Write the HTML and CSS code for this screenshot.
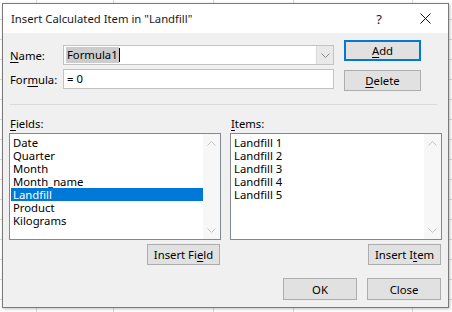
FILE: index.html
```html
<!DOCTYPE html>
<html lang="en">
<head>
<meta charset="UTF-8">
<meta name="viewport" content="width=device-width, initial-scale=1.0">
<title>Insert Calculated Item</title>
<link rel="stylesheet" href="styles.css">
</head>
<body>

<div class="dialog">
    <div class="titlebar">
        <span class="title">Insert Calculated Item in "Landfill"</span>
        <span class="cap-btn help">?</span>
        <span class="cap-btn close">
            <svg width="11" height="11" viewBox="0 0 11 11"><path d="M0.5 0.5L10.5 10.5M10.5 0.5L0.5 10.5" stroke="#111" stroke-width="1"/></svg>
        </span>
    </div>

    <div class="content">
        <div class="top">
            <div class="inputs">
                <div class="row first">
                    <label class="lbl"><u>N</u>ame:</label>
                    <div class="combo">
                        <span class="combo-text"><span class="sel">Formula1</span><span class="caret"></span></span>
                        <span class="combo-arrow">
                            <svg width="9" height="5" viewBox="0 0 9 5"><path d="M0.5 0.5L4.5 4.5L8.5 0.5" fill="none" stroke="#8a8a8a"/></svg>
                        </span>
                    </div>
                </div>
                <div class="row">
                    <label class="lbl">For<u>m</u>ula:</label>
                    <div class="textbox">= 0</div>
                </div>
            </div>
            <div class="side-btns">
                <button class="btn default"><u>A</u>dd</button>
                <button class="btn"><u>D</u>elete</button>
            </div>
        </div>

        <div class="sep"></div>

        <div class="lists">
            <div class="col">
                <div class="list-label"><u>F</u>ields:</div>
                <div class="listbox">
                    <ul class="items">
                        <li>Date</li>
                        <li>Quarter</li>
                        <li>Month</li>
                        <li>Month_name</li>
                        <li class="selected">Landfill</li>
                        <li>Product</li>
                        <li>Kilograms</li>
                    </ul>
                    <div class="scroll">
                        <svg width="9" height="5" viewBox="0 0 9 5"><path d="M0.5 4.5L4.5 0.5L8.5 4.5" fill="none" stroke="#c2c2c2"/></svg>
                        <svg width="9" height="5" viewBox="0 0 9 5"><path d="M0.5 0.5L4.5 4.5L8.5 0.5" fill="none" stroke="#c2c2c2"/></svg>
                    </div>
                </div>
                <div class="col-foot">
                    <button class="btn insert">Insert Fi<u>e</u>ld</button>
                </div>
            </div>
            <div class="col">
                <div class="list-label"><u>I</u>tems:</div>
                <div class="listbox">
                    <ul class="items">
                        <li>Landfill 1</li>
                        <li>Landfill 2</li>
                        <li>Landfill 3</li>
                        <li>Landfill 4</li>
                        <li>Landfill 5</li>
                    </ul>
                    <div class="scroll">
                        <svg width="9" height="5" viewBox="0 0 9 5"><path d="M0.5 4.5L4.5 0.5L8.5 4.5" fill="none" stroke="#c2c2c2"/></svg>
                        <svg width="9" height="5" viewBox="0 0 9 5"><path d="M0.5 0.5L4.5 4.5L8.5 0.5" fill="none" stroke="#c2c2c2"/></svg>
                    </div>
                </div>
                <div class="col-foot">
                    <button class="btn insert">Insert I<u>t</u>em</button>
                </div>
            </div>
        </div>

        <div class="footer">
            <button class="btn wide">OK</button>
            <button class="btn wide">Close</button>
        </div>
    </div>
</div>

</body>
</html>
```

FILE: styles.css
```css
body {
    margin: 0;
    width: 452px;
    height: 312px;
    overflow: hidden;
    font-family: "Noto Sans", "Open Sans", sans-serif;
    font-size: 11.3px;
    color: #000;
    background-color: #fff;
    background-image:
        linear-gradient(to right, transparent 36px, #d9d9d9 36px, #d9d9d9 37px, transparent 37px),
        linear-gradient(to right, transparent 113px, #d9d9d9 113px, #d9d9d9 114px, transparent 114px),
        linear-gradient(to right, transparent 213px, #d9d9d9 213px, #d9d9d9 214px, transparent 214px),
        linear-gradient(to right, transparent 293px, #d9d9d9 293px, #d9d9d9 294px, transparent 294px),
        linear-gradient(to right, transparent 412px, #d9d9d9 412px, #d9d9d9 413px, transparent 413px),
        repeating-linear-gradient(to bottom, transparent 0, transparent 19px, #d9d9d9 19px, #d9d9d9 20px);
}
u {
    text-decoration: underline;
    text-underline-offset: 2px;
}
.dialog {
    margin: 3px 0 0 2px;
    width: 447px;
    height: 305px;
    box-sizing: border-box;
    border: 1px solid #7a7a7a;
    background: #f0f0f0;
    box-shadow: 1px 1px 3px rgba(0, 0, 0, 0.25);
    display: flex;
    flex-direction: column;
}
.titlebar {
    height: 29px;
    background: #fff;
    display: flex;
    align-items: center;
    flex-shrink: 0;
}
.title {
    flex: 1;
    padding-left: 8px;
    color: #1a1a1a;
}
.cap-btn {
    width: 46px;
    height: 29px;
    display: flex;
    align-items: center;
    justify-content: center;
}
.help {
    font-size: 13px;
    color: #222;
}
.content {
    flex: 1;
    padding: 7px 6px 0 6px;
}
.top {
    display: flex;
}
.inputs {
    width: 325px;
}
.row {
    display: flex;
    align-items: center;
    margin-top: 4px;
}
.row.first {
    margin-top: 5px;
}
.lbl {
    width: 53px;
    padding-left: 1px;
}
.combo, .textbox {
    width: 271px;
    height: 20px;
    box-sizing: border-box;
    border: 1px solid #c3c3c3;
    background: #fff;
}
.combo {
    display: flex;
}
.combo-text {
    flex: 1;
    display: flex;
    align-items: center;
    padding-left: 2px;
}
.sel {
    background: #cccccc;
    padding: 0 1px;
    line-height: 16px;
}
.caret {
    width: 1px;
    height: 14px;
    background: #000;
}
.combo-arrow {
    width: 16px;
    border-left: 1px solid #dadada;
    background: #e9e9e9;
    display: flex;
    align-items: center;
    justify-content: center;
}
.textbox {
    padding-left: 3px;
    line-height: 18px;
}
.side-btns {
    margin-left: 10px;
    display: flex;
    flex-direction: column;
}
.btn {
    font-family: inherit;
    font-size: 11.3px;
    color: #000;
    background: #e1e1e1;
    border: 1px solid #adadad;
    padding: 0;
    margin: 0;
    height: 21px;
    width: 77px;
}
.btn.default {
    border: 2px solid #0078d7;
}
.side-btns .btn + .btn {
    margin-top: 9px;
}
.sep {
    margin: 13px 5px 0 1px;
    height: 1px;
    background: #d9d9d9;
}
.lists {
    display: flex;
    gap: 9px;
}
.col {
    width: 212px;
}
.list-label {
    margin-top: 12px;
    line-height: 14px;
    height: 14px;
    padding-left: 1px;
    margin-bottom: 2px;
}
.listbox {
    height: 107px;
    box-sizing: border-box;
    border: 1px solid #828790;
    background: #fff;
    display: flex;
}
.items {
    list-style: none;
    margin: 0;
    padding: 2px 0 0 1px;
    flex: 1;
}
.items li {
    line-height: 13px;
    height: 13px;
    padding-left: 2px;
}
.items li.selected {
    background: #0078d7;
    color: #fff;
}
.scroll {
    width: 17px;
    background: #f7f7f7;
    display: flex;
    flex-direction: column;
    justify-content: space-between;
    align-items: center;
    padding: 7px 0 6px;
}
.col-foot {
    display: flex;
    justify-content: flex-end;
    margin-top: 4px;
    padding-right: 1px;
}
.btn.insert {
    width: 73px;
}
.footer {
    display: flex;
    justify-content: flex-end;
    gap: 10px;
    margin-top: 13px;
    padding-right: 1px;
}
.btn.wide {
    width: 74px;
    height: 22px;
}
```
